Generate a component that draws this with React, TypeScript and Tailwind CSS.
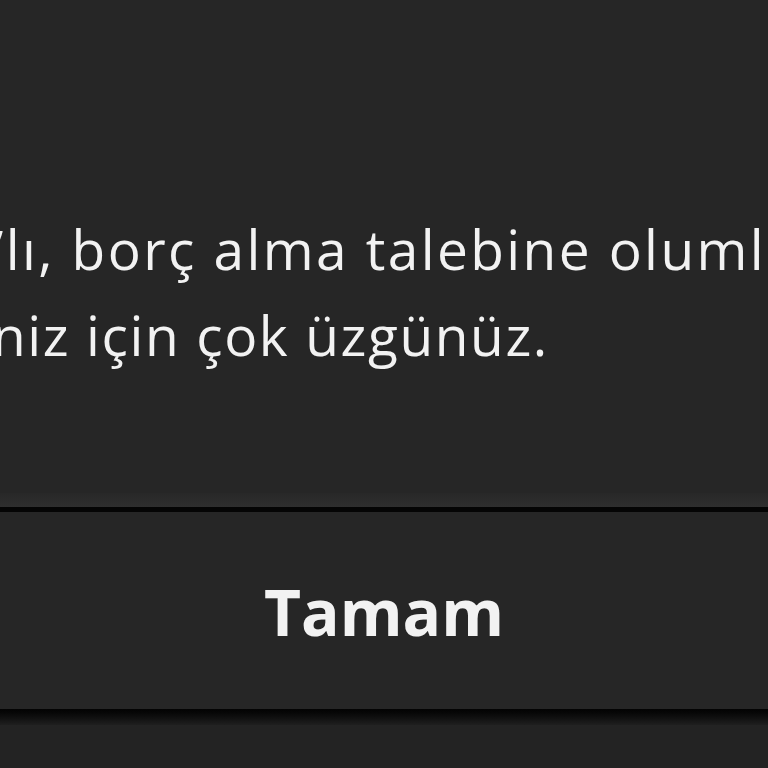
export default function App() {
  return (
    <div
      className="h-[768px] w-[768px] overflow-hidden bg-[#262626] text-[#f2f2f2] flex flex-col"
      style={{ fontFamily: '"Open Sans", "Noto Sans", sans-serif' }}
    >
      <div className="h-[493px] pt-[206px] flex flex-col">
        <div className="whitespace-nowrap text-[55px] leading-[86px] tracking-[2.4px] ml-[-6px]">’lı, borç alma talebine olumlu yanıt</div>
        <div className="whitespace-nowrap text-[55px] leading-[86px] tracking-[1.6px] ml-[-8px]">niz için çok üzgünüz.</div>
      </div>
      <div className="h-[14px] bg-gradient-to-b from-[#282828] to-[#2f2f2f]" />
      <div className="h-[5px] bg-[#050505]" />
      <div className="h-[197px] flex items-center justify-center">
        <span className="text-[64px] font-bold pt-[2px]">Tamam</span>
      </div>
      <div className="h-[16px] bg-gradient-to-b from-[#030303] to-[#1f1f1f]" />
      <div className="flex-1 bg-[#232323]" />
    </div>
  );
}
